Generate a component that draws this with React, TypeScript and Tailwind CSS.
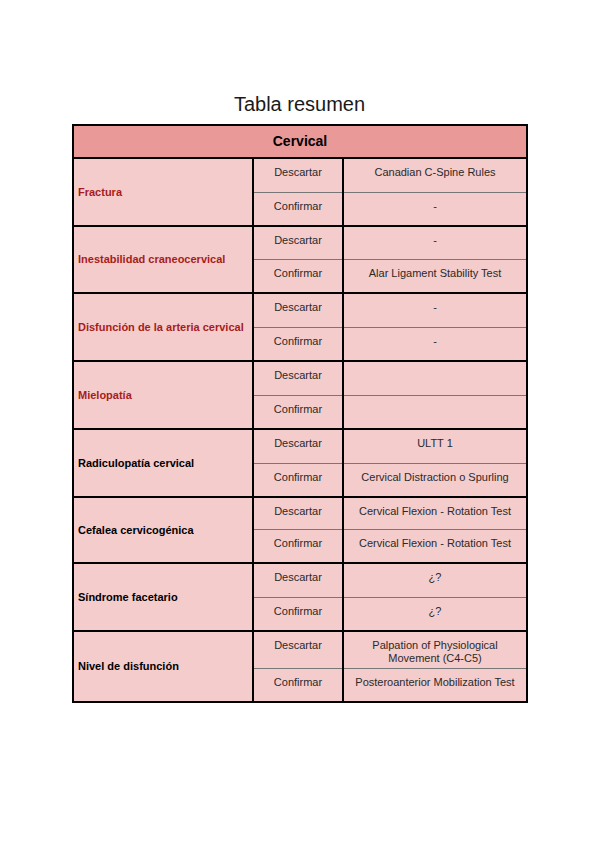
const rows = [
  { label: "Fractura", red: true, d: "Canadian C-Spine Rules", c: "-", h: "h-[34px]" },
  { label: "Inestabilidad craneocervical", red: true, d: "-", c: "Alar Ligament Stability Test", h: "h-[33px]" },
  { label: "Disfunción de la arteria cervical", red: true, d: "-", c: "-", h: "h-[34px]" },
  { label: "Mielopatía", red: true, d: "", c: "", h: "h-[34px]" },
  { label: "Radiculopatía cervical", red: false, d: "ULTT 1", c: "Cervical Distraction o Spurling", h: "h-[34px]" },
  { label: "Cefalea cervicogénica", red: false, d: "Cervical Flexion - Rotation Test", c: "Cervical Flexion - Rotation Test", h: "h-[32px]" },
  { label: "Síndrome facetario", red: false, d: "¿?", c: "¿?", h: "h-[34px]" },
  { label: "Nivel de disfunción", red: false, d: "Palpation of Physiological Movement (C4-C5)", c: "Posteroanterior Mobilization Test", h: "h-[37px] px-[20px]" },
];

export default function App() {
  return (
    <div className="w-[599px] h-[848px] bg-white pt-[92px] font-['Liberation_Sans',Arial,sans-serif]">
      <h1 className="text-center text-[20px] leading-[24px] text-[#1a1a1a] mb-[8px]">Tabla resumen</h1>
      <div className="ml-[72px] w-[456px] border-2 border-black bg-[#f4cccc] text-[11px] leading-[13px] text-[#2a2a2a]">
        <div className="h-[31px] bg-[#ea9999] flex items-center justify-center font-bold text-[14px] text-black">
          Cervical
        </div>
        {rows.map((r) => (
          <div key={r.label} className="flex border-t-2 border-black">
            <div
              className={`w-[180px] border-r-2 border-black flex items-center pl-[4px] font-bold ${
                r.red ? "text-[#a61c1c]" : "text-black"
              }`}
            >
              {r.label}
            </div>
            <div className="w-[90px] border-r-2 border-black flex flex-col">
              <div className={`${r.h} px-0 pt-[7px] text-center border-b border-[#777]`}>Descartar</div>
              <div className="h-[32px] pt-[7px] text-center">Confirmar</div>
            </div>
            <div className="flex-1 flex flex-col">
              <div className={`${r.h} pt-[7px] text-center border-b border-[#777]`}>{r.d}</div>
              <div className="h-[32px] pt-[7px] text-center">{r.c}</div>
            </div>
          </div>
        ))}
      </div>
    </div>
  );
}
